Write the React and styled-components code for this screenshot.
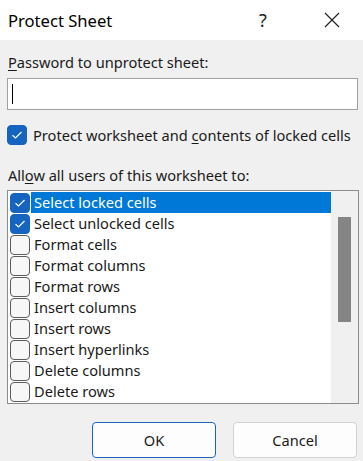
import React from "react";
import styled, { createGlobalStyle } from "styled-components";

const GlobalStyle = createGlobalStyle`
  html, body {
    margin: 0;
    padding: 0;
    background: #f0f0f0;
  }
  * {
    box-sizing: border-box;
  }
`;

const Dialog = styled.div`
  width: 363px;
  height: 461px;
  background: #f0f0f0;
  font-family: "Noto Sans", "Open Sans", sans-serif;
  font-size: 14.6px;
  color: #1a1a1a;
  display: flex;
  flex-direction: column;
  overflow: hidden;
`;

const TitleBar = styled.div`
  height: 40px;
  background: #ffffff;
  display: flex;
  align-items: center;
  padding: 0 6px 0 8px;
`;

const Title = styled.div`
  font-size: 16.6px;
  flex: 1;
  color: #000;
`;

const TitleButton = styled.div`
  width: ${props => props.w}px;
  margin-right: ${props => props.mr || 0}px;
  height: 40px;
  display: flex;
  align-items: center;
  justify-content: center;
  font-size: 18px;
  color: #222;
`;

const Body = styled.div`
  padding: 12px 5px 0 7px;
  display: flex;
  flex-direction: column;
`;

const Label = styled.div`
  padding-left: 1px;
  line-height: 20px;
  margin-bottom: ${props => props.mb || 0}px;
`;

const U = styled.span`
  text-decoration: underline;
  text-underline-offset: 2px;
`;

const Input = styled.div`
  height: 32px;
  background: #fff;
  border: 1px solid #a0a0a0;
  display: flex;
  align-items: center;
  padding-left: 4px;
  margin-bottom: 14px;
`;

const Caret = styled.div`
  width: 1px;
  height: 20px;
  background: #000;
`;

const CheckRow = styled.div`
  display: flex;
  align-items: center;
  gap: 6px;
  height: 21px;
  margin-bottom: 20px;
`;

const Box = styled.div`
  width: 20px;
  height: 20px;
  border-radius: 4px;
  flex-shrink: 0;
  display: flex;
  align-items: center;
  justify-content: center;
  background: ${props => (props.checked ? "#1464c0" : "#f7f7f7")};
  border: 1px solid ${props => (props.checked ? "#1464c0" : "#5c5c5c")};
`;

const ListBox = styled.div`
  margin-top: 5px;
  width: 352px;
  height: 214px;
  border: 1px solid #8c8c8c;
  background: #fff;
  display: flex;
  padding: 1px 0 1px 2px;
`;

const Items = styled.div`
  flex: 1;
  display: flex;
  flex-direction: column;
`;

const Item = styled.div`
  height: 21px;
  display: flex;
  align-items: center;
`;

const ItemText = styled.div`
  flex: 1;
  height: 21px;
  line-height: 20px;
  padding-left: 3px;
  margin-left: 1px;
  background: ${props => (props.selected ? "#0078d7" : "transparent")};
  color: ${props => (props.selected ? "#fff" : "#1a1a1a")};
`;

const ScrollTrack = styled.div`
  width: 27px;
  background: #f0f0f0;
  margin: -1px 0;
  padding: 26px 7px 0 7px;
`;

const Thumb = styled.div`
  height: 105px;
  background: #858585;
`;

const Footer = styled.div`
  display: flex;
  justify-content: flex-end;
  gap: 17px;
  padding: 18px 6px 0 0;
`;

const Button = styled.div`
  width: 124px;
  height: 36px;
  border-radius: 4px;
  background: #fdfdfd;
  border: 1px solid ${props => (props.primary ? "#1a67b8" : "#d2d2d2")};
  display: flex;
  align-items: center;
  justify-content: center;
  font-size: 14.6px;
`;

const Check = () => (
  <svg width="12" height="10" viewBox="0 0 12 10">
    <path d="M1.5 5.2 L4.5 8 L10.5 2" fill="none" stroke="#fff" strokeWidth="1.2" />
  </svg>
);

const items = [
  { label: "Select locked cells", checked: true, selected: true },
  { label: "Select unlocked cells", checked: true },
  { label: "Format cells" },
  { label: "Format columns" },
  { label: "Format rows" },
  { label: "Insert columns" },
  { label: "Insert rows" },
  { label: "Insert hyperlinks" },
  { label: "Delete columns" },
  { label: "Delete rows" }
];

const App = () => (
  <>
    <GlobalStyle />
    <Dialog>
      <TitleBar>
        <Title>Protect Sheet</Title>
        <TitleButton w={28} mr={30}>?</TitleButton>
        <TitleButton w={50}>
          <svg width="16" height="16" viewBox="0 0 16 16">
            <path d="M1 1 L15 15 M15 1 L1 15" stroke="#222" strokeWidth="1.2" />
          </svg>
        </TitleButton>
      </TitleBar>
      <Body>
        <Label mb={6}>
          <U>P</U>assword to unprotect sheet:
        </Label>
        <Input>
          <Caret />
        </Input>
        <CheckRow>
          <Box checked>
            <Check />
          </Box>
          <span>
            Protect worksheet and <U>c</U>ontents of locked cells
          </span>
        </CheckRow>
        <Label>
          All<U>o</U>w all users of this worksheet to:
        </Label>
        <ListBox>
          <Items>
            {items.map(it => (
              <Item key={it.label}>
                <Box checked={it.checked}>{it.checked && <Check />}</Box>
                <ItemText selected={it.selected}>{it.label}</ItemText>
              </Item>
            ))}
          </Items>
          <ScrollTrack>
            <Thumb />
          </ScrollTrack>
        </ListBox>
      </Body>
      <Footer>
        <Button primary>OK</Button>
        <Button>Cancel</Button>
      </Footer>
    </Dialog>
  </>
);

export default App;
